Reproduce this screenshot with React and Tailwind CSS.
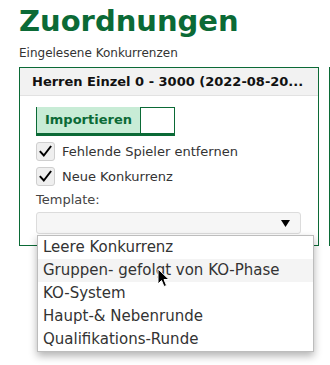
import React from "react";

function Check() {
  return (
    <div className="w-[19px] h-[19px] rounded-[3px] border border-[#cfcfcf] bg-[#efefef] flex items-center justify-center shrink-0">
      <svg width="13" height="13" viewBox="0 0 13 13">
        <path d="M1.5 6.8 L4.8 10.5 L11.5 1.8" fill="none" stroke="#000" strokeWidth="2" strokeLinecap="square" />
      </svg>
    </div>
  );
}

const items = [
  "Leere Konkurrenz",
  "Gruppen- gefolgt von KO-Phase",
  "KO-System",
  "Haupt-& Nebenrunde",
  "Qualifikations-Runde",
];

export default function App() {
  return (
    <div className="relative w-[330px] h-[365px] overflow-hidden bg-white text-[#333]" style={{ fontFamily: '"DejaVu Sans", sans-serif' }}>
      <div className="pl-[19px] pt-[4px]">
        <h1 className="text-[29px] leading-[34px] font-bold text-[#0b6a36]">Zuordnungen</h1>
        <p className="text-[12px] leading-[15px] mt-[8px] text-[#333]">Eingelesene Konkurrenzen</p>
        <div className="flex gap-[10px] mt-[6px]">
          <div className="w-[300px] shrink-0 border border-[#0b6a36] flex flex-col">
            <div className="h-[28px] bg-[#f2f2f2] border-b border-[#e2e2e2] pl-[12px] pr-[10px] flex items-center">
              <span className="whitespace-nowrap text-[13px] font-bold text-[#111]">Herren Einzel 0 - 3000 (2022-08-20...</span>
            </div>
            <div className="pl-[16px] pr-[15px] pt-[11px] pb-[11px]">
              <div className="flex w-[139px] h-[29px] border-b-[3px] border-[#0b6a36]">
                <div className="w-[104px] bg-[#c8ecd6] border-l border-[#0b6a36] flex items-center justify-center text-[13px] font-bold text-[#0b6a36]">Importieren</div>
                <div className="flex-1 bg-white border border-b-0 border-[#0b6a36]"></div>
              </div>
              <div className="flex items-center gap-[7px] mt-[6px] h-[19px]">
                <Check />
                <span className="text-[13px]">Fehlende Spieler entfernen</span>
              </div>
              <div className="flex items-center gap-[7px] mt-[6px] h-[19px]">
                <Check />
                <span className="text-[13px]">Neue Konkurrenz</span>
              </div>
              <div className="text-[13px] leading-[16px] mt-[6px] text-[#444]">Template:</div>
              <div className="mt-[4px] h-[22px] w-[265px] rounded-[3px] border border-[#dcdcdc] bg-[#f6f6f6] flex items-center justify-end pr-[10px]">
                <svg width="9" height="7" viewBox="0 0 9 7"><path d="M0 0 H9 L4.5 7 Z" fill="#000" /></svg>
              </div>
            </div>
          </div>
          <div className="w-[40px] shrink-0 border border-[#0b6a36]"></div>
        </div>
      </div>

      <div className="absolute left-[37px] top-[235px] w-[277px] bg-white border border-[#bdbdbd] shadow-[0_4px_8px_rgba(0,0,0,0.3)]">
        {items.map((t, i) => (
          <div key={t} className={`h-[23px] flex items-center pl-[5px] text-[15px] text-[#333] ${i === 1 ? "bg-[#f4f4f4]" : ""}`}>{t}</div>
        ))}
      </div>

      <svg className="absolute left-[157px] top-[268px]" width="13" height="20" viewBox="0 0 13 20">
        <path d="M1 1 L1 16 L4.5 12.5 L7 18.5 L9.5 17.5 L7 11.5 L12 11.5 Z" fill="#000" stroke="#fff" strokeWidth="1" strokeLinejoin="round" />
      </svg>
    </div>
  );
}
